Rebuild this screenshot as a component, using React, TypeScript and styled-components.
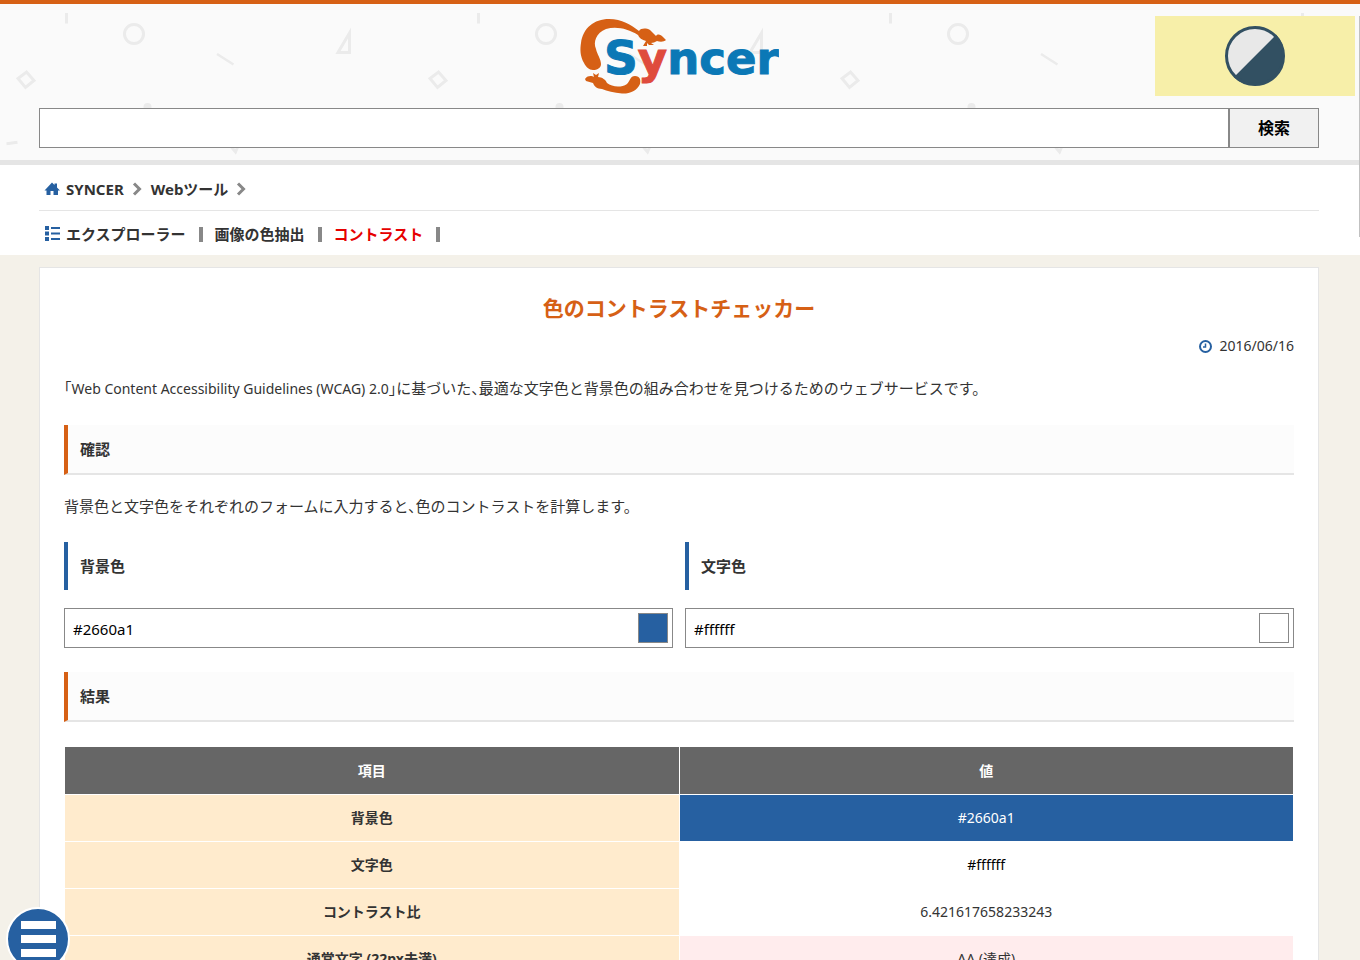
import React, { useState } from "react";
import styled, { createGlobalStyle } from "styled-components";

const fonts = `"Noto Sans", "Noto Sans CJK JP", sans-serif`;

const GlobalStyle = createGlobalStyle`
  html { scrollbar-width: none; }
  body {
    margin: 0;
    background: #f4f1e9;
    color: #333;
    font: 15px/24px ${fonts};
    font-feature-settings: "halt";
  }
  *, *::before, *::after { box-sizing: border-box; }
  h1, h2, h3, p { margin: 0; }
  input, button { font: inherit; color: #000; }
  a { color: inherit; text-decoration: none; }
`;

const Header = styled.header`
  position: relative;
  border-top: 4px solid #d66015;
  border-bottom: 5px solid #e5e5e5;
  background: #fafafa;
  padding: 12px 41px 12px 39px;
`;

const Backdrop = styled.svg`
  position: absolute;
  inset: 0;
  width: 100%;
  height: 100%;
`;

const LogoLink = styled.a`
  position: relative;
  display: block;
  width: 200px;
  height: 80px;
  margin: 0 auto 12px;
`;

const Banner = styled.a`
  position: absolute;
  top: 12px;
  right: 5px;
  width: 200px;
  height: 80px;
  background: #f7efa9;
`;

const SearchForm = styled.form`
  position: relative;
  display: flex;
  height: 40px;
`;

const SearchBox = styled.input`
  flex: 1;
  min-width: 0;
  border: 1px solid #888;
  border-radius: 0;
  background: #fff;
  padding: 0 8px;
`;

const SearchButton = styled.button`
  width: 90px;
  border: 1px solid #888;
  background: #f1f1f1;
  padding: 0;
  font-size: 16px;
  font-weight: 700;
`;

const NavArea = styled.div`
  background: #fff;
  padding: 0 41px 0 39px;
`;

const NavRow = styled.nav`
  display: flex;
  align-items: center;
  height: 45px;
  padding: 2px 0 0 5px;
  font-weight: 700;

  & + & { border-top: 1px solid #e5e5e5; }
`;

const NavIcon = styled.svg`
  width: 17px;
  height: 16px;
  margin-right: 5px;
  fill: #2660a1;
`;

const NavLink = styled.a<{ $current?: boolean }>`
  color: ${(p) => (p.$current ? "#e60000" : "#333")};
`;

const Latin = styled.span`
  font-size: 14px;
`;

const Chevron = styled.svg`
  width: 10px;
  height: 14px;
  margin: 0 9px 0 8px;
  fill: none;
  stroke: #888;
  stroke-width: 3;
`;

const Divider = styled.i`
  width: 4px;
  height: 15px;
  margin: 0 12px 0 13px;
  background: #888;
`;

const Article = styled.main`
  margin: 12px 41px 0 39px;
  border: 1px solid #e5e5e5;
  background: #fff;
  padding: 24px;
`;

const Title = styled.h1`
  color: #d66015;
  font-size: 21px;
  line-height: 32px;
  text-align: center;
`;

const PostDate = styled.div`
  display: flex;
  justify-content: flex-end;
  align-items: center;
  margin: 10px 0 18px;
  font-size: 14px;
`;

const Clock = styled.svg`
  width: 13px;
  height: 13px;
  margin-right: 8px;
  fill: none;
  stroke: #2660a1;
  stroke-width: 2;
`;

const Section = styled.h2`
  margin: 24px 0 19px;
  border-left: 4px solid #d66015;
  border-bottom: 2px solid #e5e5e5;
  background: #fcfcfc;
  padding: 12px;
  font-size: 15px;
  line-height: 24px;
`;

const Fields = styled.div`
  display: grid;
  grid-template-columns: 1fr 1fr;
  gap: 12px;
  margin-top: 24px;
`;

const FieldLabel = styled.label`
  display: block;
  margin-bottom: 18px;
  border-left: 4px solid #2660a1;
  padding: 12px;
  font-weight: 700;
`;

const FieldBox = styled.div`
  display: flex;
  align-items: center;
  height: 40px;
  border: 1px solid #888;
  padding-right: 4px;
`;

const FieldInput = styled.input`
  flex: 1;
  min-width: 0;
  border: 0;
  background: none;
  padding: 2px 8px 0;
`;

const Swatch = styled.i`
  width: 30px;
  height: 30px;
  border: 1px solid #888;
`;

const Results = styled.table`
  width: 100%;
  margin-top: 24px;
  border-collapse: separate;
  border-spacing: 1px;
  table-layout: fixed;
  font-size: 14px;
  text-align: center;

  th, td { height: 46px; padding: 0; }
  thead th { height: 47px; background: #666; color: #fff; }
  tbody th { background: #ffebcd; }
`;

const Value = styled.td<{ $bg?: string; $fg?: string }>`
  background: ${(p) => p.$bg ?? "#fff"};
  color: ${(p) => p.$fg ?? "#333"};
`;

const MenuButton = styled.button`
  position: fixed;
  left: 6px;
  bottom: -11px;
  display: flex;
  flex-direction: column;
  align-items: center;
  justify-content: center;
  gap: 6px;
  width: 64px;
  height: 64px;
  border: 2px solid #fff;
  border-radius: 50%;
  background: #2660a1;
  padding: 0;
`;

const MenuBar = styled.span`
  width: 35px;
  height: 8px;
  background: #fff;
`;

const ScrollThumb = styled.div`
  position: fixed;
  top: 16px;
  right: 0;
  width: 1px;
  height: 221px;
  background: #c1c1c1;
`;

function HeaderPattern() {
  return (
    <Backdrop aria-hidden="true">
      <defs>
        <pattern id="shapes" width="412" height="200" patternUnits="userSpaceOnUse" y="-4">
          <g fill="none" stroke="#ebebeb" strokeWidth="3">
            <path d="M66.500 13v10.500" />
            <circle cx="134" cy="34" r="9.500" />
            <path d="M217 54l16.500 10.500" strokeWidth="2.500" />
            <path d="M349.500 33v19.500h-11.500z" />
            <path d="M26.500 72l7.500 8.500-8.500 7-7.500-9z" />
            <path d="M6.500 143.800l11-1.500" />
            <path d="M229 144l6.500 8 3.500-8" />
          </g>
          <circle cx="147.500" cy="107" r="4" fill="#ebebeb" />
        </pattern>
      </defs>
      <rect width="100%" height="100%" fill="url(#shapes)" />
    </Backdrop>
  );
}

function Logo() {
  return (
    <svg width="200" height="80" viewBox="0 0 200 80" role="img" aria-label="Syncer">
      <g fill="#d66015">
        <path d="M5 47C1 40 1 33 2 27C4 12 15 3 30 3C43 3 52 9 60 15C62 12 67 12 71 14C73 16 75 18 77 20C79 17 82 19 84 21L87 24C85 26 81 26 78 25C76 26 74 27 72 27L75 29L70 29L68 27L68 30L64 30L67 25C63 24 60 22 59 19C49 13 38 10 27 13C17 17 14 26 17 33C18 38 22 43 22 48C22 52 18 54 14 54C10 54 7 51 5 47Z" />
        <path d="M6 63C9 59 13 60 15 61L14 57L17 59L20 57L19 61C23 61 27 64 28 67C33 71 42 72 48 68C51 65 51 60 56 60C61 60 62 64 61 68C58 75 50 78 43 77.500C35 77 28 75 23 73C18 73 15 70 14 67L7 65Z" />
      </g>
      <text
        x="25"
        y="58"
        fontFamily='"DejaVu Sans", sans-serif'
        fontWeight="700"
        fontSize="45"
        fill="#0b78b6"
        stroke="#0b78b6"
      >
        <tspan fontSize="47">S</tspan>
        <tspan fill="#df4b3d" stroke="#df4b3d">y</tspan>ncer
      </text>
    </svg>
  );
}

function ColorField({ id, label, initial }: { id: string; label: string; initial: string }) {
  const [color, setColor] = useState(initial);
  return (
    <div>
      <FieldLabel htmlFor={id}>{label}</FieldLabel>
      <FieldBox>
        <FieldInput id={id} value={color} onChange={(e) => setColor(e.target.value)} />
        <Swatch style={{ background: color }} />
      </FieldBox>
    </div>
  );
}

const rows = [
  { name: "背景色", value: "#2660a1", bg: "#2660a1", fg: "#fff" },
  { name: "文字色", value: "#ffffff", fg: "#000" },
  { name: "コントラスト比", value: "6.421617658233243" },
  { name: "通常文字 (22px未満)", value: "AA (達成)", bg: "#ffeced" },
];

export default function App() {
  return (
    <>
      <GlobalStyle />
      <Header>
        <HeaderPattern />
        <LogoLink href="#"><Logo /></LogoLink>
        <Banner href="#" aria-label="コントラスト">
          <svg width="200" height="80" aria-hidden="true">
            <circle cx="100" cy="40" r="28.500" fill="#e8e8e8" />
            <path d="M121.200 18.800A30 30 0 0 1 78.800 61.200z" fill="#325062" />
            <circle cx="100" cy="40" r="28.500" fill="none" stroke="#325062" strokeWidth="3" />
          </svg>
        </Banner>
        <SearchForm role="search" onSubmit={(e) => e.preventDefault()}>
          <SearchBox type="text" aria-label="検索" />
          <SearchButton type="submit">検索</SearchButton>
        </SearchForm>
      </Header>

      <NavArea>
        <NavRow>
          <NavIcon viewBox="0 0 17 16">
            <path d="M8 1.500L10.500 4V2.500h2.500v4L16 9.500H14V14H9.500V10H6.500v4H2.500V9.500H.500z" />
          </NavIcon>
          <NavLink href="#">SYNCER</NavLink>
          <Chevron viewBox="0 0 10 14"><path d="M2 1.500L7.500 7L2 12.500" /></Chevron>
          <NavLink href="#">Webツール</NavLink>
          <Chevron viewBox="0 0 10 14"><path d="M2 1.500L7.500 7L2 12.500" /></Chevron>
        </NavRow>
        <NavRow>
          <NavIcon viewBox="0 0 17 16">
            <path d="M1 0h4v4H1zM7 1h9v2H7zM1 5.500h4v4H1zM7 6.500h9v2H7zM1 11h4v4H1zM7 12h9v2H7z" />
          </NavIcon>
          <NavLink href="#">エクスプローラー</NavLink>
          <Divider />
          <NavLink href="#">画像の色抽出</NavLink>
          <Divider />
          <NavLink href="#" $current>コントラスト</NavLink>
          <Divider />
        </NavRow>
      </NavArea>

      <Article>
        <Title>色のコントラストチェッカー</Title>
        <PostDate>
          <Clock viewBox="0 0 13 13">
            <circle cx="6.500" cy="6.500" r="5.500" />
            <path d="M6.500 3.500v3.500H4" strokeWidth="1.500" />
          </Clock>
          <time dateTime="2016-06-16">2016/06/16</time>
        </PostDate>
        <p>
          「<Latin>Web Content Accessibility Guidelines (WCAG) 2.0</Latin>」に基づいた、最適な文字色と背景色の組み合わせを見つけるためのウェブサービスです。
        </p>
        <Section>確認</Section>
        <p>背景色と文字色をそれぞれのフォームに入力すると、色のコントラストを計算します。</p>
        <Fields>
          <ColorField id="background" label="背景色" initial="#2660a1" />
          <ColorField id="foreground" label="文字色" initial="#ffffff" />
        </Fields>
        <Section>結果</Section>
        <Results>
          <thead>
            <tr><th scope="col">項目</th><th scope="col">値</th></tr>
          </thead>
          <tbody>
            {rows.map((r) => (
              <tr key={r.name}>
                <th scope="row">{r.name}</th>
                <Value $bg={r.bg} $fg={r.fg}>{r.value}</Value>
              </tr>
            ))}
          </tbody>
        </Results>
      </Article>

      <MenuButton type="button" aria-label="メニュー">
        <MenuBar /><MenuBar /><MenuBar />
      </MenuButton>
      <ScrollThumb />
    </>
  );
}
